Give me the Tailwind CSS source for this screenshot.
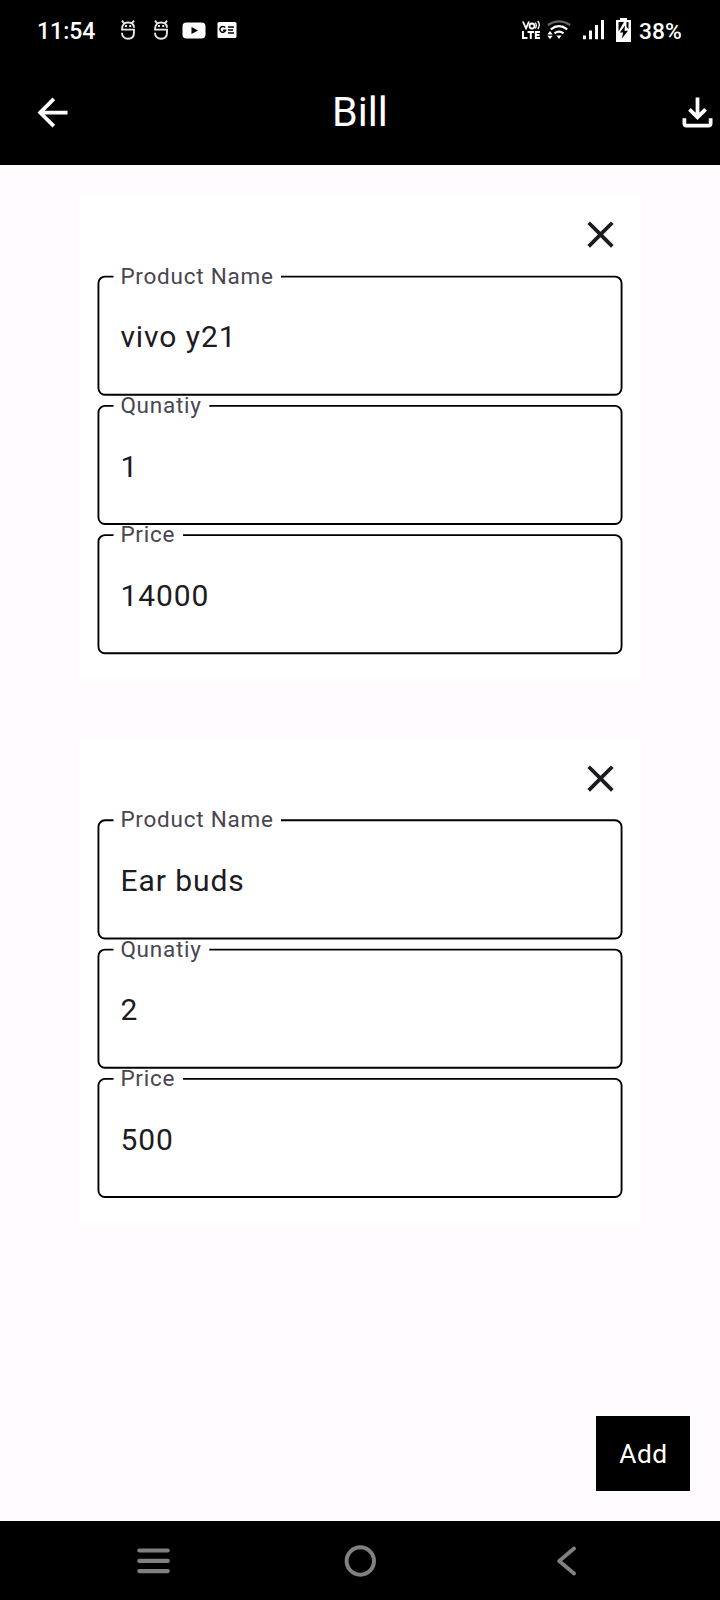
<!DOCTYPE html>
<html lang="en">
<head>
<meta charset="utf-8">
<title>Bill</title>
<script src="https://cdn.jsdelivr.net/npm/@tailwindcss/browser@4"></script>
</head>
<body class="flex h-[1600px] w-[720px] flex-col overflow-hidden bg-[#fffbff] font-['Roboto',sans-serif] text-[#1c1b1f]">

<!-- Status bar -->
<div class="flex h-[60px] shrink-0 items-center bg-black pl-[37px] text-white">
  <span class="w-[83px] pt-[3px] text-[23px] font-medium leading-[30px]">11:54</span>
  <svg class="mr-[17px] h-5 w-4 shrink-0" viewBox="0 0 16 20" fill="none" stroke="#e8e8e8" stroke-width="1.9"><path d="M14 7.800C14 4.200 11.500 2.500 8 2.500S2 4.500 2 9.600h12V12.500c0 4-2.500 6.200-6 6.200s-6-2.200-6-6M2 .6l1.800 2.400M14 .6l-1.800 2.400"/><path d="M5 6h2M9.200 6h2" stroke-width="2"/></svg>
  <svg class="mr-[13px] h-5 w-4 shrink-0" viewBox="0 0 16 20" fill="none" stroke="#e8e8e8" stroke-width="1.9"><path d="M14 7.800C14 4.200 11.500 2.500 8 2.500S2 4.500 2 9.600h12V12.500c0 4-2.500 6.200-6 6.200s-6-2.200-6-6M2 .6l1.800 2.400M14 .6l-1.800 2.400"/><path d="M5 6h2M9.200 6h2" stroke-width="2"/></svg>
  <svg class="mr-[11px] h-[17px] w-6 shrink-0" viewBox="0 0 24 17"><rect x=".5" y=".5" width="23" height="16" rx="4" fill="#fff"/><path d="M9.500 5l6.500 3.500-6.500 3.500z" fill="#000"/></svg>
  <svg class="h-4 w-5 shrink-0" viewBox="0 0 20 16"><rect x=".5" width="19" height="16" rx="1.500" fill="#fff"/><path d="M8.200 5.600A2.900 2.900 0 1 0 8.600 8.300H6M11 5h6M11 8h5M11 11h6" fill="none" stroke="#000" stroke-width="1.500"/></svg>

  <div class="-mt-[1px] ml-[285px] flex w-[19px] shrink-0 flex-col items-start">
    <svg class="h-[10px] w-[19px]" viewBox="0 0 19 10" fill="none" stroke="#fff" stroke-width="1.800"><path d="M.9 1.500L4 8.300 7 1.500"/><circle cx="10" cy="6" r="2.500"/><path d="M13.300 2.500q2 3 0 6M15.800 1q3 4 0 8" stroke-width="1.300"/></svg>
    <svg class="h-[10px] w-[19px]" viewBox="0 0 19 10" fill="none" stroke="#fff" stroke-width="2"><path d="M1 1v7.100h4.500M5.500 2h6.500M8.800 2V9M18 2h-4.200v6.100H18M13.800 5H17.500"/></svg>
  </div>
  <svg class="-mt-[1px] ml-[6px] h-5 w-6 shrink-0" viewBox="0 0 24 20" fill="none" stroke="#fff" stroke-width="2.200"><path d="M.8 5Q12-2.300 23.200 5" stroke="#666"/><path d="M3.800 9.300Q12 3 20.200 9.300M7.500 13.300q4.500-3.300 9 0"/><path d="M9.500 15.500h5L12 19zM.3 14.500h5.400L3 11zM.3 15.800h5.400L3 19.300z" fill="#fff" stroke="none"/></svg>
  <svg class="ml-[12px] h-5 w-[22px] shrink-0" viewBox="0 0 22 20" fill="#fff"><path d="M0 15.500h3v3.700H0zM6 10.500h3v8.700H6zM12 5h3v14.200h-3zM18 0h3v19.200h-3z"/></svg>
  <svg class="ml-[11px] h-6 w-[15px] shrink-0" viewBox="0 0 15 24"><path d="M4 0h7v2h4v22H0V2h4z" fill="#fff"/><path d="M8 4H2.500v9.500zM10.500 4h2v7l-2-2zM9 7.500L3.800 14.500H7l-1 6L12 12.800H8.500z" fill="#000"/></svg>
  <span class="ml-[8px] pt-[3px] text-[22.8px] font-medium leading-[30px]">38%</span>
</div>

<!-- App bar -->
<header class="flex h-[105px] shrink-0 items-center bg-black pl-[30px] text-white">
  <svg class="h-[45px] w-[45px]" viewBox="0 0 24 24" fill="#fff"><path d="M20 11H7.830l5.590-5.590L12 4l-8 8 8 8 1.410-1.410L7.830 13H20z"/></svg>
  <h1 class="flex-1 pb-[2px] pl-[257px] text-[41.25px] font-normal leading-[48px]">Bill</h1>
  <svg class="h-[45px] w-[45px]" viewBox="0 0 24 24" fill="#fff"><path d="M18 15v3H6v-3H4v3c0 1.100.9 2 2 2h12c1.100 0 2-.9 2-2v-3zM17 11l-1.410-1.410L13 12.170V4h-2v8.170L8.410 9.590 7 11l5 5z"/></svg>
</header>

<main class="flex h-[1356px] shrink-0 flex-col pt-[29px]">
  <section class="ml-[79px] flex h-[486px] w-[562px] flex-col bg-white pl-[18px]">
    <div class="flex h-[81px] shrink-0 justify-end pr-[18px] pt-[18px]">
      <svg class="h-[45px] w-[45px]" viewBox="0 0 24 24" fill="#1c1b1f"><path d="M19 6.410L17.590 5 12 10.590 6.410 5 5 6.410 10.590 12 5 17.590 6.410 19 12 13.410 17.590 19 19 17.590 13.410 12z"/></svg>
    </div>
    <div class="grid h-[129px] shrink-0">
      <svg class="col-start-1 row-start-1 h-[122px] w-[526px]" viewBox="0 0 526 122" fill="none" stroke="#000" stroke-width="1.875"><path d="M184 1.600H518a6.560 6.560 0 0 1 6.560 6.560V113.200a6.560 6.560 0 0 1-6.560 6.560H8a6.560 6.560 0 0 1-6.560-6.560V8.160A6.560 6.560 0 0 1 8 1.600H16.500"/></svg>
      <div class="col-start-1 row-start-1 flex flex-col pl-[23.4px]">
        <span class="-mt-[13px] text-[22.5px] leading-[28px] tracking-[0.75px] text-[#49454f]">Product Name</span>
        <span class="mt-[29px] text-[30px] leading-[36px] tracking-[0.94px]">vivo y21</span>
      </div>
    </div>
    <div class="grid h-[129px] shrink-0">
      <svg class="col-start-1 row-start-1 h-[122px] w-[526px]" viewBox="0 0 526 122" fill="none" stroke="#000" stroke-width="1.875"><path d="M112.300 1.900H518a6.560 6.560 0 0 1 6.560 6.560V113.500a6.560 6.560 0 0 1-6.560 6.560H8a6.560 6.560 0 0 1-6.560-6.560V8.460A6.560 6.560 0 0 1 8 1.900H16.500"/></svg>
      <div class="col-start-1 row-start-1 flex flex-col pl-[23.4px]">
        <span class="-mt-[13px] text-[22.5px] leading-[28px] tracking-[0.75px] text-[#49454f]">Qunatiy</span>
        <span class="mt-[30px] text-[30px] leading-[36px] tracking-[0.94px]">1</span>
      </div>
    </div>
    <div class="grid h-[129px] shrink-0">
      <svg class="col-start-1 row-start-1 h-[122px] w-[526px]" viewBox="0 0 526 122" fill="none" stroke="#000" stroke-width="1.875"><path d="M86 2.100H518a6.560 6.560 0 0 1 6.560 6.560V113.700a6.560 6.560 0 0 1-6.560 6.560H8a6.560 6.560 0 0 1-6.560-6.560V8.660A6.560 6.560 0 0 1 8 2.100H16.500"/></svg>
      <div class="col-start-1 row-start-1 flex flex-col pl-[23.4px]">
        <span class="-mt-[13px] text-[22.5px] leading-[28px] tracking-[0.75px] text-[#49454f]">Price</span>
        <span class="mt-[30px] text-[30px] leading-[36px] tracking-[0.94px]">14000</span>
      </div>
    </div>
  </section>

  <section class="ml-[79px] mt-[58px] flex h-[486px] w-[562px] flex-col bg-white pl-[18px]">
    <div class="flex h-[81px] shrink-0 justify-end pr-[18px] pt-[18px]">
      <svg class="h-[45px] w-[45px]" viewBox="0 0 24 24" fill="#1c1b1f"><path d="M19 6.410L17.590 5 12 10.590 6.410 5 5 6.410 10.590 12 5 17.590 6.410 19 12 13.410 17.590 19 19 17.590 13.410 12z"/></svg>
    </div>
    <div class="grid h-[129px] shrink-0">
      <svg class="col-start-1 row-start-1 h-[122px] w-[526px]" viewBox="0 0 526 122" fill="none" stroke="#000" stroke-width="1.875"><path d="M184 1.300H518a6.560 6.560 0 0 1 6.560 6.560V112.900a6.560 6.560 0 0 1-6.560 6.560H8a6.560 6.560 0 0 1-6.560-6.560V7.860A6.560 6.560 0 0 1 8 1.300H16.500"/></svg>
      <div class="col-start-1 row-start-1 flex flex-col pl-[23.4px]">
        <span class="-mt-[14px] text-[22.5px] leading-[28px] tracking-[0.75px] text-[#49454f]">Product Name</span>
        <span class="mt-[30px] text-[30px] leading-[36px] tracking-[0.94px]">Ear buds</span>
      </div>
    </div>
    <div class="grid h-[129px] shrink-0">
      <svg class="col-start-1 row-start-1 h-[122px] w-[526px]" viewBox="0 0 526 122" fill="none" stroke="#000" stroke-width="1.875"><path d="M112.300 1.600H518a6.560 6.560 0 0 1 6.560 6.560V113.200a6.560 6.560 0 0 1-6.560 6.560H8a6.560 6.560 0 0 1-6.560-6.560V8.160A6.560 6.560 0 0 1 8 1.600H16.500"/></svg>
      <div class="col-start-1 row-start-1 flex flex-col pl-[23.4px]">
        <span class="-mt-[13px] text-[22.5px] leading-[28px] tracking-[0.75px] text-[#49454f]">Qunatiy</span>
        <span class="mt-[29px] text-[30px] leading-[36px] tracking-[0.94px]">2</span>
      </div>
    </div>
    <div class="grid h-[129px] shrink-0">
      <svg class="col-start-1 row-start-1 h-[122px] w-[526px]" viewBox="0 0 526 122" fill="none" stroke="#000" stroke-width="1.875"><path d="M86 1.900H518a6.560 6.560 0 0 1 6.560 6.560V113.500a6.560 6.560 0 0 1-6.560 6.560H8a6.560 6.560 0 0 1-6.560-6.560V8.460A6.560 6.560 0 0 1 8 1.900H16.500"/></svg>
      <div class="col-start-1 row-start-1 flex flex-col pl-[23.4px]">
        <span class="-mt-[13px] text-[22.5px] leading-[28px] tracking-[0.75px] text-[#49454f]">Price</span>
        <span class="mt-[30px] text-[30px] leading-[36px] tracking-[0.94px]">500</span>
      </div>
    </div>
  </section>

  <button class="mb-[30px] mr-[30px] mt-auto flex h-[75px] w-[94px] shrink-0 items-center justify-center self-end bg-black pl-[1px] text-[26.25px] leading-[36px] tracking-[0.6px] text-white">Add</button>
</main>

<!-- System navigation -->
<nav class="flex h-[79px] shrink-0 items-center bg-black pl-[137px]">
  <svg class="h-[26px] w-[33px]" viewBox="0 0 33 26" fill="none" stroke="#808080" stroke-width="4.200" stroke-linecap="round"><path d="M2.300 2.500h28.400M2.300 12.900h28.400M2.300 23.100h28.400"/></svg>
  <svg class="ml-[174px] h-8 w-8" viewBox="0 0 32 32" fill="none" stroke="#808080" stroke-width="4"><circle cx="16.300" cy="16" r="13.700"/></svg>
  <svg class="ml-[180px] h-[30px] w-5" viewBox="0 0 20 30" fill="none" stroke="#808080" stroke-width="3.800" stroke-linecap="round" stroke-linejoin="round"><path d="M18 2.500L3.200 15 18 27.500"/></svg>
</nav>
</body>
</html>
